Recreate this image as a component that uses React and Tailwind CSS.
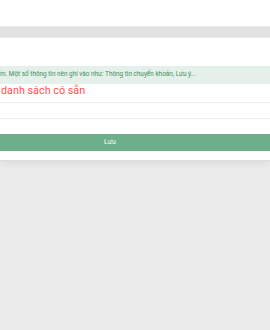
import React from 'react';

const App = () => {
  return (
    <div className="w-[270px] h-[330px] overflow-hidden bg-[#ebebeb] font-['Roboto','Liberation_Sans',Arial,sans-serif]">
      {/* Form sheet */}
      <div className="relative h-[161px] bg-white border-b border-[#dddddd] shadow-[0_3px_8px_rgba(0,0,0,0.06)]">
        <div className="ml-[-50px] w-[320px]">
          <div className="h-[26px]" />
          <div className="h-[12px] bg-[#e3e3e3] border-y border-[#ebebeb]" />
          <div className="h-[28px]" />

          {/* Hint */}
          <div className="flex h-[18px] items-center bg-[#e6f0ea] text-[6.4px] text-[#3f8f60] whitespace-nowrap">
            <div className="flex w-[50px] shrink-0 justify-end">
              <span className="shrink-0">Ghi chú cho sản phẩ</span>
            </div>
            <span>m. Một số thông tin nên ghi vào như: Thông tin chuyển khoản, Lưu ý...</span>
          </div>

          {/* Choose */}
          <div className="flex h-[19px] items-start border-b border-[#f0f0f0] text-[10.8px] leading-[14px] text-[#ff5252] whitespace-nowrap">
            <div className="flex w-[50px] shrink-0 justify-end">
              <span className="shrink-0">Chọn từ </span>
            </div>
            <span className="pl-[1px]">danh sách có sẵn</span>
          </div>

          <div className="h-[16px] border-b border-[#f0f0f0]" />
          <div className="h-[15px]" />

          <button className="flex h-[17px] w-full items-center justify-center bg-[#6daf8a] text-[7px] text-white">
            Lưu
          </button>
        </div>
      </div>
    </div>
  );
};

export default App;
